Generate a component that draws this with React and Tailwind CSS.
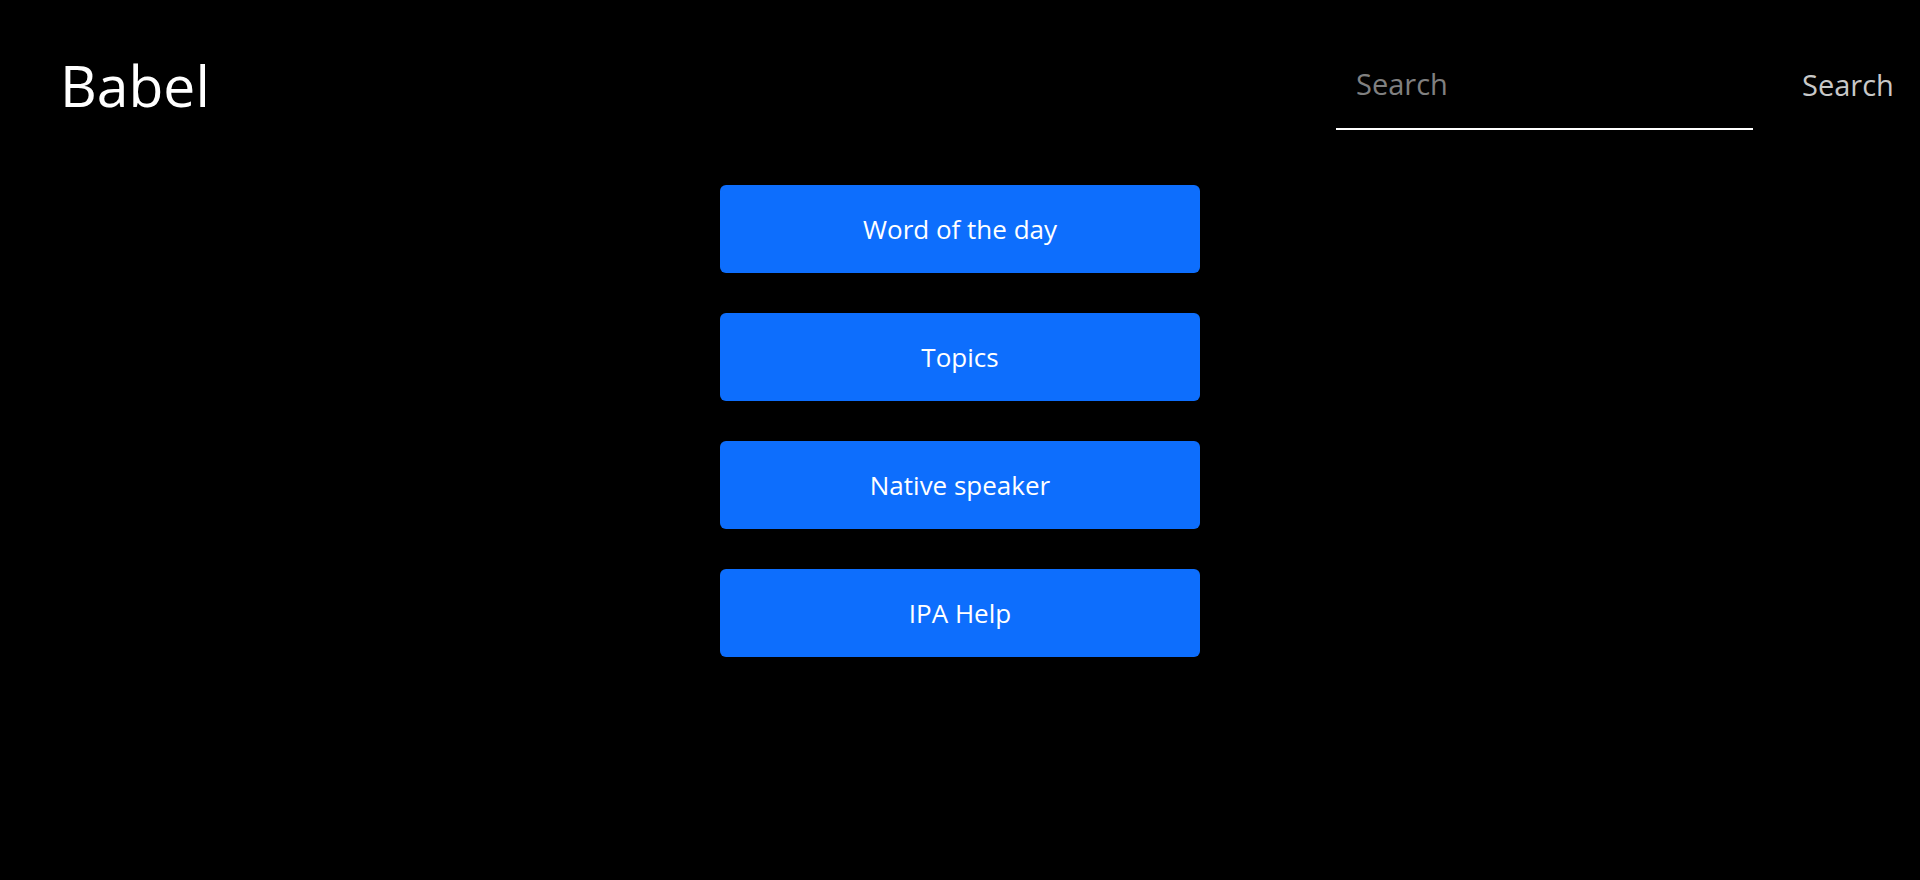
import React, { useState } from 'react';

const links = ['Word of the day', 'Topics', 'Native speaker', 'IPA Help'];

export default function App() {
  const [query, setQuery] = useState('');

  return (
    <div className="min-h-screen bg-black text-white" style={{ fontFamily: '"Open Sans", "Noto Sans", sans-serif' }}>
      <header className="flex items-start justify-between pl-[60px]">
        <h1 className="mt-[57px] text-[57px] leading-[57px] font-normal text-white">Babel</h1>
        <div className="flex items-start">
          <input
            type="text"
            value={query}
            onChange={e => setQuery(e.target.value)}
            placeholder="Search"
            className="mt-[38px] h-[92px] w-[417px] border-b-2 border-white bg-transparent px-[20px] text-[29px] text-white placeholder:text-[#808080] focus:outline-none"
          />
          <button className="mt-[70px] w-[167px] pl-[49px] text-left text-[29px] leading-[29px] text-[#c8c8c8]">
            Search
          </button>
        </div>
      </header>

      <main className="mt-[55px] flex flex-col items-center gap-[40px]">
        {links.map(label => (
          <button
            key={label}
            className="flex h-[88px] w-[480px] items-center justify-center rounded-md bg-[#0d6efd] text-[26px] text-white"
          >
            {label}
          </button>
        ))}
      </main>
    </div>
  );
}
